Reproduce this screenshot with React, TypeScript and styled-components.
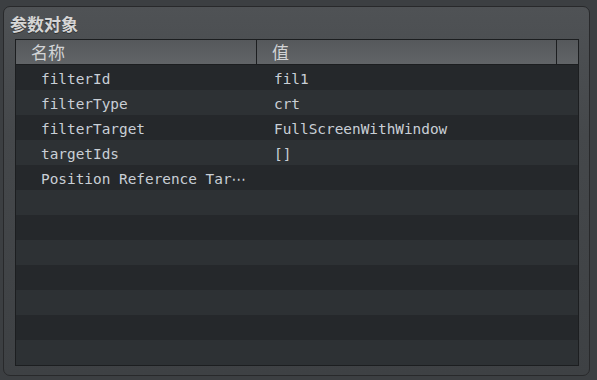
import React from 'react';
import styled, {createGlobalStyle} from 'styled-components';

const GlobalStyle = createGlobalStyle`
    html, body {
        margin: 0;
        background: #3c3f42;
    }
`;

const Page = styled.div`
    padding: 6px 7px 4px 3px;
    width: 597px;
    height: 380px;
    box-sizing: border-box;
`;

const Panel = styled.div`
    display: flex;
    flex-direction: column;
    width: 587px;
    height: 370px;
    box-sizing: border-box;
    border: 1px solid #28292b;
    border-radius: 7px;
    background: linear-gradient(to bottom, #4f5255 0%, #45484b 35%, #3e4144 100%);
`;

const Title = styled.div`
    font-family: "Noto Sans CJK SC", "Noto Sans", sans-serif;
    font-weight: bold;
    font-size: 17px;
    line-height: 20px;
    color: #d6d6d6;
    padding: 7px 0 5px 6px;
    text-shadow: 0 1px 0 #2e3032;
`;

const Table = styled.div`
    margin-left: 11px;
    width: 562px;
    border: 1px solid #1c1e20;
    display: flex;
    flex-direction: column;
`;

const Header = styled.div`
    display: grid;
    grid-template-columns: 241px 1fr 21px;
    height: 24px;
    border-bottom: 1px solid #1c1e20;
    background: linear-gradient(to bottom, #55585b, #616467);
`;

const HeaderCell = styled.div<{$pad: number}>`
    font-family: "Noto Sans CJK SC", "Noto Sans", sans-serif;
    font-size: 17px;
    line-height: 24px;
    color: #d2d4d6;
    padding-left: ${(p) => p.$pad}px;
    border-right: 1px solid #1c1e20;
    overflow: hidden;
    &:last-child {
        border-right: none;
    }
`;

const Row = styled.div<{$odd: boolean}>`
    display: grid;
    grid-template-columns: 242px 1fr;
    height: 25px;
    background: ${(p) => (p.$odd ? '#2d3134' : '#25282b')};
`;

const Cell = styled.div<{$pad: number}>`
    font-family: "DejaVu Sans Mono", monospace;
    font-size: 14.4px;
    line-height: 21px;
    padding-top: 4px;
    box-sizing: border-box;
    color: #c9cfd6;
    padding-left: ${(p) => p.$pad}px;
    white-space: nowrap;
    overflow: hidden;
`;

const Ellipsis = styled.span`
    font-family: "DejaVu Sans", sans-serif;
    letter-spacing: 1px;
`;

const rows: [React.ReactNode, string][] = [
    ['filterId', 'fil1'],
    ['filterType', 'crt'],
    ['filterTarget', 'FullScreenWithWindow'],
    ['targetIds', '[]'],
    [<>Position Reference Tar<Ellipsis>{'\u22ef'}</Ellipsis></>, ''],
];

const TOTAL_ROWS = 12;

const App = () => {
    const filled = [...rows];
    while (filled.length < TOTAL_ROWS) filled.push(['', '']);

    return (
        <Page>
            <GlobalStyle />
            <Panel>
                <Title>参数对象</Title>
                <Table>
                    <Header>
                        <HeaderCell $pad={15}>名称</HeaderCell>
                        <HeaderCell $pad={15}>值</HeaderCell>
                        <HeaderCell $pad={0} />
                    </Header>
                    {filled.map(([name, value], i) => (
                        <Row key={i} $odd={i % 2 === 1}>
                            <Cell $pad={25}>{name}</Cell>
                            <Cell $pad={16}>{value}</Cell>
                        </Row>
                    ))}
                </Table>
            </Panel>
        </Page>
    );
};

export default App;
